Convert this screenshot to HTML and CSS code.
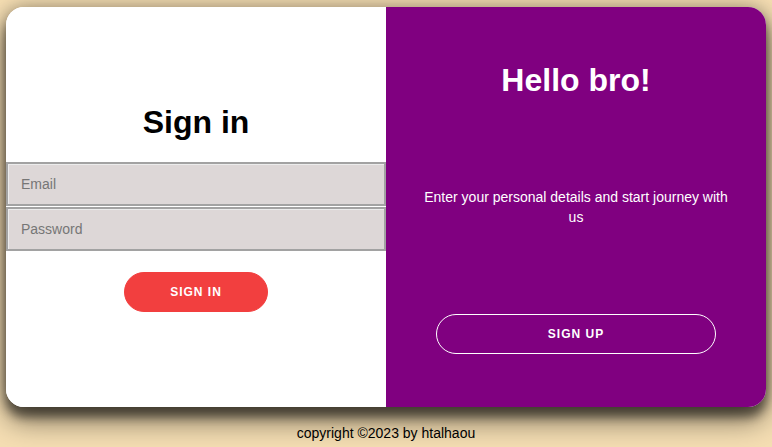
FILE: index.html
```html
<!DOCTYPE html>
<html>
<head>
<meta charset="utf-8">
<link rel="stylesheet" href="styles.css">
</head>
<body>
<div class="container">
  <div class="panel signin">
    <h1 class="title dark">Sign in</h1>
    <input class="field" type="email" placeholder="Email">
    <input class="field second" type="password" placeholder="Password">
    <button class="btn primary">Sign In</button>
  </div>
  <div class="panel overlay">
    <h1 class="title light">Hello bro!</h1>
    <p class="lead">Enter your personal details and start journey with us</p>
    <button class="btn ghost">Sign Up</button>
  </div>
</div>
<footer class="footer">copyright ©2023 by htalhaou</footer>
</body>
</html>
```
FILE: styles.css
```css
* { box-sizing: border-box; }
html, body { margin: 0; padding: 0; }
body {
  background: #f5deb3;
  font-family: "Liberation Sans", Arial, sans-serif;
  height: 447px;
  overflow: hidden;
  display: flex;
  flex-direction: column;
  align-items: center;
}
.container {
  margin-top: 7px;
  width: 760px;
  height: 400px;
  border-radius: 18px;
  overflow: hidden;
  display: flex;
  box-shadow: 0 14px 28px rgba(0,0,0,0.5), 0 10px 10px rgba(0,0,0,0.42), 0 0 18px rgba(0,0,0,0.3);
  background: #fff;
}
.panel {
  width: 380px;
  display: flex;
  flex-direction: column;
  align-items: center;
}
.signin { background: #fff; padding-top: 97px; }
.overlay { background: #800080; padding: 55px 30px 0; }
.title {
  margin: 0;
  font-size: 32px;
  font-weight: bold;
  line-height: 37px;
}
.dark { color: #000; }
.light { color: #fff; }
.field {
  width: 380px;
  height: 44px;
  margin: 0;
  border: 2px solid #a2a2a2;
  box-shadow: inset 1px 1px 0 #ececec;
  background: #ddd7d7;
  padding: 0 13px;
  font-family: "Liberation Sans", Arial, sans-serif;
  font-size: 14px;
  color: #333;
  outline: none;
}
.signin .title { margin-bottom: 21px; }
.field::placeholder { color: #767676; }
.second { margin-top: 1px; }
.btn {
  height: 40px;
  border-radius: 20px;
  font-family: "Liberation Sans", Arial, sans-serif;
  font-size: 12px;
  font-weight: bold;
  letter-spacing: 1px;
  text-transform: uppercase;
  color: #fff;
  cursor: pointer;
}
.primary {
  margin-top: 21px;
  width: 144px;
  background: #f23f3f;
  border: 1px solid #f23f3f;
}
.ghost {
  margin-top: 87px;
  width: 280px;
  background: transparent;
  border: 1px solid #fff;
}
.lead {
  margin: 88px 0 0;
  color: #fff;
  font-size: 14px;
  line-height: 20px;
  text-align: center;
}
.footer {
  margin-top: 18px;
  font-size: 14px;
  line-height: 16px;
  color: #000;
}
```
